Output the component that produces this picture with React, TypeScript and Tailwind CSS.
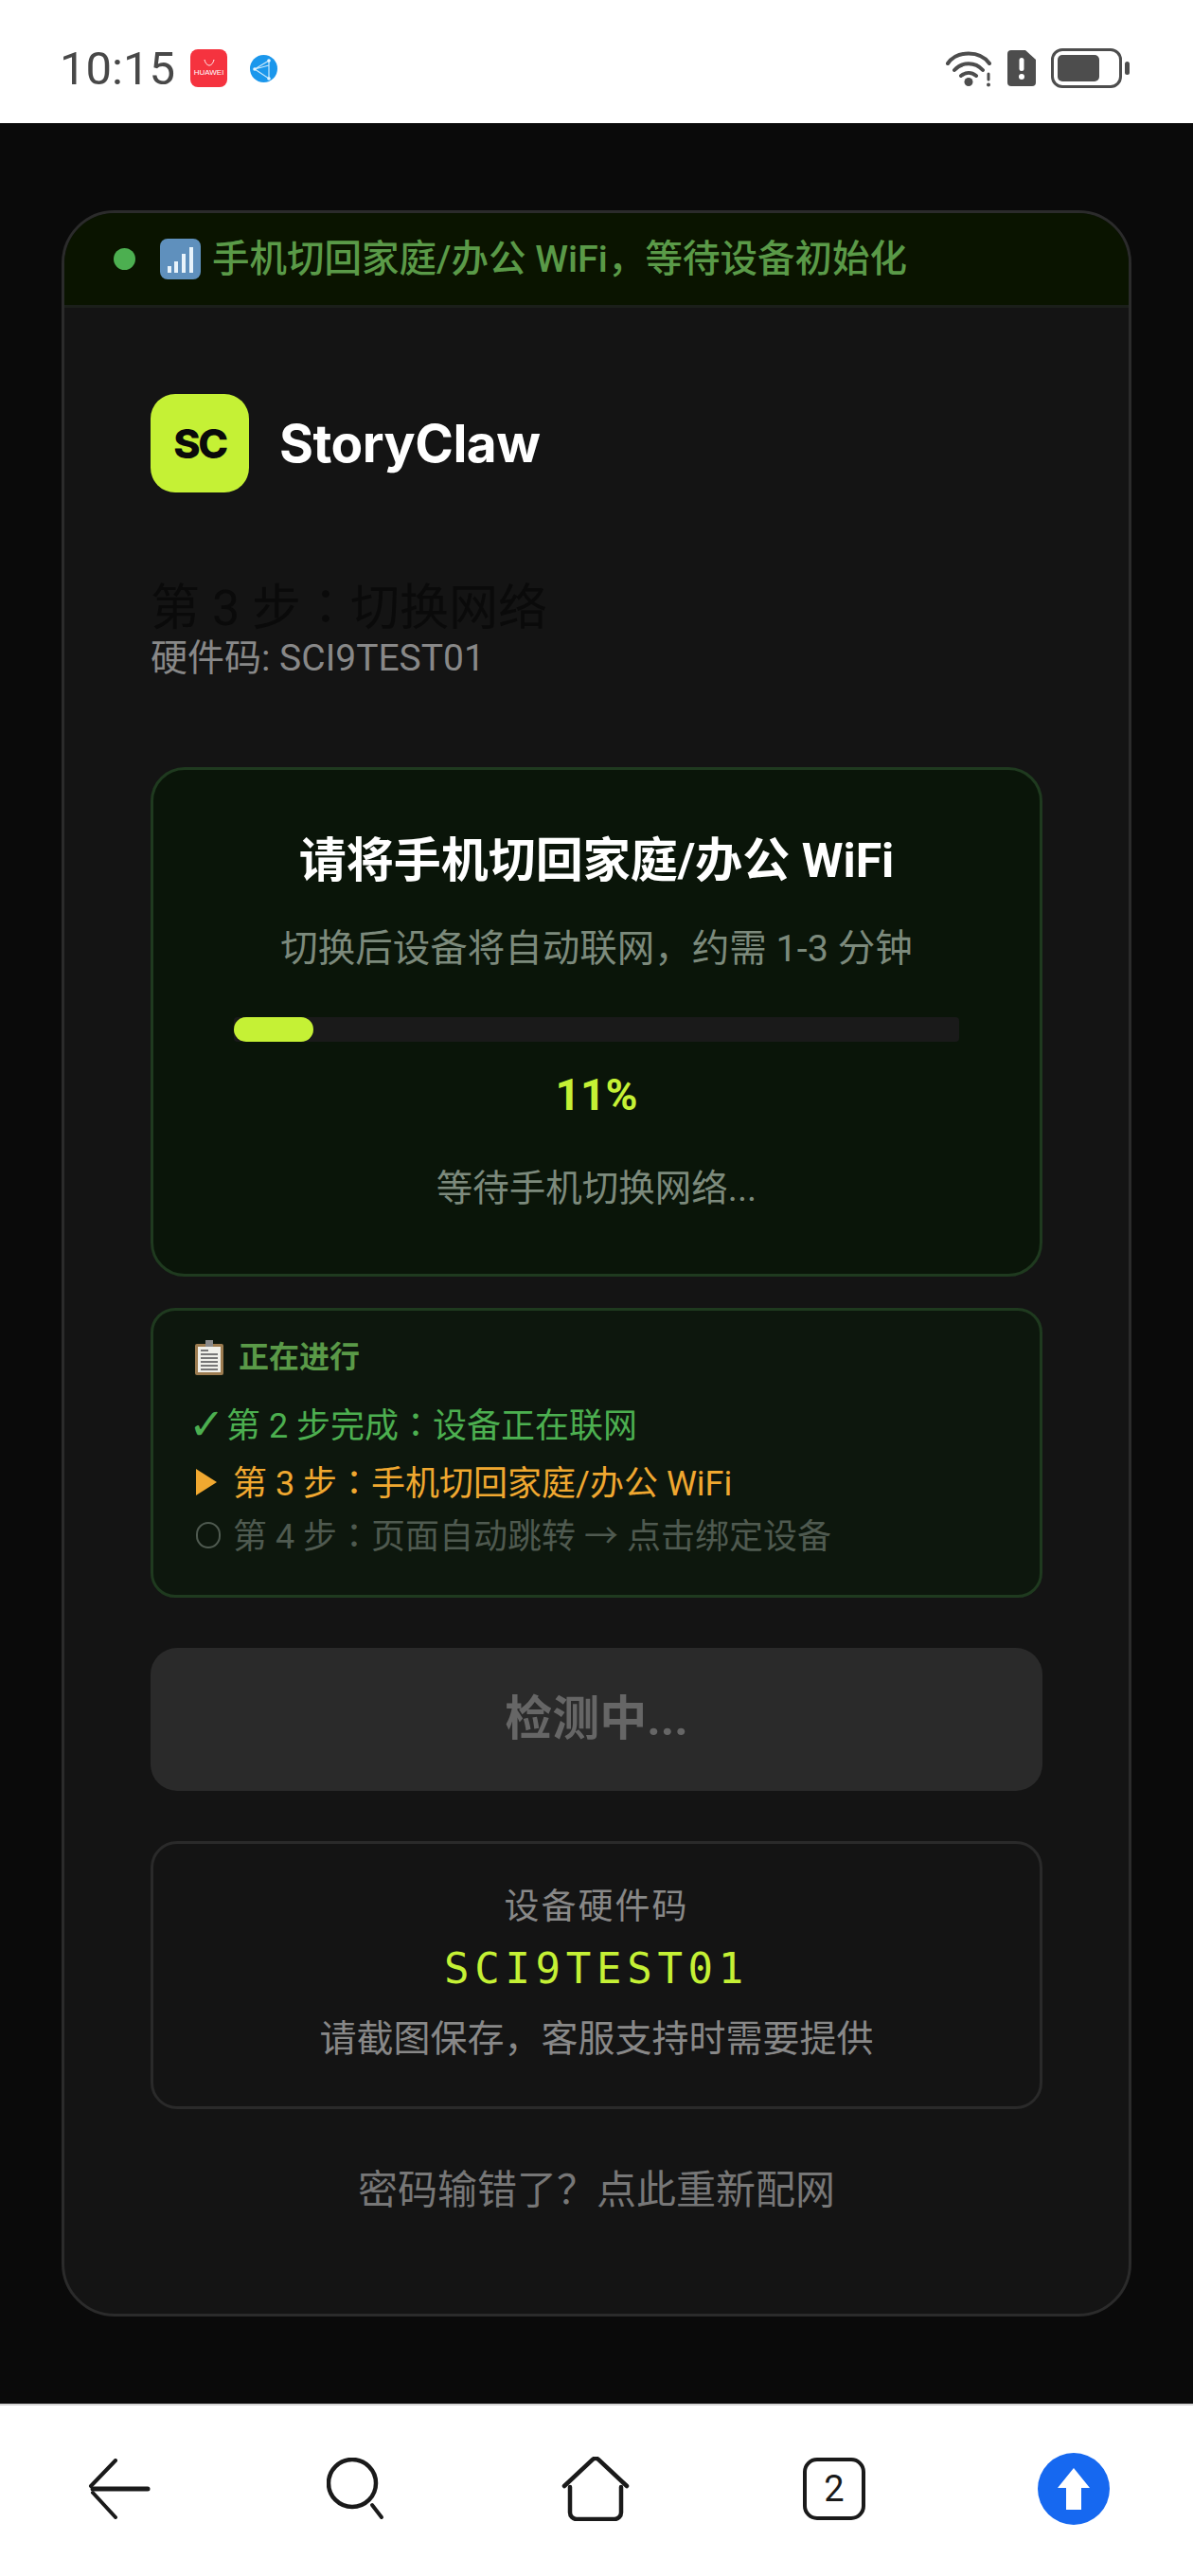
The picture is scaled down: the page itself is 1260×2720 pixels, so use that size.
const sans = "font-['Roboto','Noto_Sans_CJK_SC',sans-serif]";

// colon sits in the middle of its box in the reference, TC font does that
function Colon() {
  return <span className="font-['Noto_Sans_CJK_TC',sans-serif]">：</span>;
}

function StatusBar() {
  return (
    <div className="flex h-[130px] shrink-0 items-center justify-between bg-white pl-[63px] pr-[67px] pt-[14px]">
      <div className="flex items-center">
        <span className="font-['Roboto',sans-serif] text-[49px] leading-none text-[#484848]">10:15</span>
        <div className="ml-[16px] flex h-[40px] w-[39px] flex-col items-center justify-center rounded-[8px] bg-[#f5333f]">
          <svg width="14" height="7" viewBox="0 0 14 7" fill="none">
            <path d="M2 0c1 4 3 6 5 6s4-2 5-6" stroke="#fff" strokeWidth="1" />
          </svg>
          <span className="mt-[2px] font-['Liberation_Sans',sans-serif] text-[8px] leading-[10px] text-white">HUAWEI</span>
        </div>
        <svg className="ml-[24px]" width="29" height="29" viewBox="0 0 29 29">
          <circle cx="14.5" cy="14.5" r="14.5" fill="#1b97ec" />
          <path d="M20 6 5 15l15 10L20 6ZM5 15l15-4" stroke="#cdeafc" strokeWidth="1.2" fill="none" />
          <circle cx="20" cy="6" r="1.8" fill="#e6f5ff" />
          <circle cx="5" cy="15" r="1.8" fill="#e6f5ff" />
          <circle cx="20" cy="25" r="1.8" fill="#e6f5ff" />
        </svg>
      </div>
      <div className="flex items-center">
        <svg width="50" height="39" viewBox="0 0 50 39" fill="none" stroke="#4d4d4d" strokeWidth="4" strokeLinecap="round">
          <path d="M2 14C12 0 36 0 46 14" />
          <path d="M9 21c8-9 22-9 30 0" />
          <path d="M16 27c5-4 11-4 16 0" />
          <circle cx="24" cy="33.5" r="4.5" fill="#4d4d4d" stroke="none" />
          <path d="M45 25v6" strokeWidth="3" />
          <circle cx="45" cy="36.5" r="2" fill="#4d4d4d" stroke="none" />
        </svg>
        <svg className="ml-[15px]" width="30" height="38" viewBox="0 0 30 38">
          <path d="M4 0h15l11 10v24a4 4 0 0 1-4 4H4a4 4 0 0 1-4-4V4a4 4 0 0 1 4-4Z" fill="#4d4d4d" />
          <rect x="12.5" y="8" width="5" height="14" rx="2.5" fill="#fff" />
          <circle cx="15" cy="28" r="3" fill="#fff" />
        </svg>
        <div className="ml-[16px] h-[42px] w-[75px] rounded-[12px] border-[3px] border-[#4d4d4d] p-[4px]">
          <div className="h-full w-[44px] rounded-[5px] bg-[#4d4d4d]" />
        </div>
        <div className="ml-[3px] h-[14px] w-[5px] rounded-[3px] bg-[#4d4d4d]" />
      </div>
    </div>
  );
}

function Banner() {
  return (
    <div className="flex h-[100px] items-center border-b-[3px] border-[#1b1f1a] bg-[#0a1400] pl-[52px]">
      <div className="h-[23px] w-[23px] rounded-full bg-[#4caf50]" />
      <svg className="ml-[26px]" width="43" height="43" viewBox="0 0 43 43">
        <rect width="43" height="43" rx="8" fill="#5f90bd" />
        <g fill="#e8f3fb">
          <rect x="8" y="29" width="4" height="7" />
          <rect x="15" y="24" width="4" height="12" />
          <rect x="23" y="16" width="4" height="20" />
          <rect x="31" y="9" width="4" height="27" />
        </g>
      </svg>
      <span className={`${sans} ml-[12px] text-[39.5px] font-medium leading-none text-[#5a9a48]`}>
        手机切回家庭/办公 WiFi，等待设备初始化
      </span>
    </div>
  );
}

function Steps() {
  return (
    <div className="mt-[33px] h-[306px] rounded-[26px] border-[3px] border-[#1f3a1f] bg-[#0d170d] pl-[42px] pt-[27px]">
      <div className="flex h-[44px] items-center">
        <svg width="30" height="38" viewBox="0 0 30 38" className="ml-[2px]">
          <rect x="0" y="5" width="30" height="33" rx="2" fill="#9c7c50" />
          <rect x="3" y="8" width="24" height="27" fill="#f0f0ea" />
          <rect x="11" y="1" width="8" height="7" fill="#8a8a8a" />
          <g fill="#777">
            <rect x="6" y="11" width="8" height="2" />
            <rect x="6" y="15" width="18" height="2" />
            <rect x="6" y="19" width="18" height="2" />
            <rect x="6" y="23" width="18" height="2" />
            <rect x="6" y="27" width="18" height="2" />
            <rect x="6" y="31" width="18" height="2" />
          </g>
        </svg>
        <span className={`${sans} ml-[16px] text-[32px] font-bold leading-none text-[#5a9a48]`}>正在进行</span>
      </div>
      <div className="mt-[20px] flex h-[58px] items-center">
        <span className="ml-[-5px] w-[40px] font-['DejaVu_Sans',sans-serif] text-[46px] font-bold leading-none text-[#4caf50]">✓</span>
        <span className={`${sans} text-[36px] leading-none text-[#4caf50]`}>第 2 步完成<Colon />设备正在联网</span>
      </div>
      <div className="mt-[2px] flex h-[60px] items-center">
        <svg width="22" height="28" viewBox="0 0 22 28" className="ml-[3px] mr-[17px]">
          <path d="M0 0 22 14 0 28Z" fill="#f0a830" />
        </svg>
        <span className={`${sans} text-[36px] leading-none text-[#f0a830]`}>第 3 步<Colon />手机切回家庭/办公 WiFi</span>
      </div>
      <div className="mt-[-2px] flex h-[56px] items-center">
        <div className="ml-[3px] mr-[13px] h-[28px] w-[26px] rounded-full border-2 border-[#4f5a50]" />
        <span className={`${sans} text-[36px] leading-none text-[#4f5a50]`}>第 4 步<Colon />页面自动跳转 → 点击绑定设备</span>
      </div>
    </div>
  );
}

function NavBar() {
  return (
    <div className="flex h-[182px] shrink-0 items-center border-t-2 border-[#d4d4d4] bg-white pb-[4px] pl-[92px] text-[#1a1a1a]">
      <svg width="68" height="64" viewBox="0 0 68 64" fill="none" stroke="#1a1a1a" strokeLinecap="round">
        <path d="M30 2 4 29" strokeWidth="4" />
        <path d="M6 32h58" strokeWidth="5" />
        <path d="M6 36 30 62" strokeWidth="4" />
      </svg>
      <svg className="ml-[185px]" width="62" height="66" viewBox="0 0 62 66" fill="none" stroke="#1a1a1a" strokeLinecap="round" strokeWidth="4.5">
        <circle cx="27" cy="27" r="25" />
        <path d="M48 50 58 63" strokeWidth="4" />
      </svg>
      <svg className="ml-[186px]" width="72" height="68" viewBox="0 0 72 68" fill="none" stroke="#1a1a1a" strokeLinecap="round" strokeWidth="4.5">
        <path d="M3 31 33 3a4 4 0 0 1 6 0l30 28" />
        <path d="M9 32v27a7 7 0 0 0 7 7h40a7 7 0 0 0 7-7V32" />
      </svg>
      <div className="ml-[183px] flex h-[66px] w-[66px] items-center justify-center rounded-[15px] border-[4px] border-[#1a1a1a]">
        <span className="font-['Roboto',sans-serif] text-[38px] leading-none">2</span>
      </div>
      <svg className="ml-[182px]" width="76" height="76" viewBox="0 0 76 76">
        <circle cx="38" cy="38" r="38" fill="#1668f0" />
        <path d="M38 16 55 37H46V60H30V37H21Z" fill="#fff" />
      </svg>
    </div>
  );
}

export default function App() {
  return (
    <div className="flex h-[2720px] w-[1260px] flex-col overflow-hidden bg-[#0a0a0a]">
      <StatusBar />
      <main className="flex-1 px-[65px] pt-[92px]">
        <div className="h-[2224px] overflow-hidden rounded-[56px] border-[3px] border-[#2b2b2b] bg-[#141414]">
          <Banner />
          <div className="px-[91px] pt-[91px]">
            <div className="flex items-center">
              <div className="flex h-[104px] w-[104px] items-center justify-center rounded-[26px] bg-[#c5f135]">
                <span className="font-['Inter',sans-serif] text-[43px] font-extrabold leading-none tracking-[-2.5px] text-[#0a0a0a]">SC</span>
              </div>
              <span className="ml-[32px] font-['Inter',sans-serif] text-[55px] font-bold leading-none tracking-[-0.5px] text-white">StoryClaw</span>
            </div>

            <h1 className={`${sans} mt-[88px] h-[60px] text-[52px] font-normal leading-[60px] text-[#0a0a0a]`}>第 3 步<Colon />切换网络</h1>
            <p className={`${sans} mt-[5px] h-[44px] text-[39px] leading-[44px] text-[#888888]`}>硬件码: SCI9TEST01</p>

            <section className="mt-[93px] flex h-[538px] flex-col items-center rounded-[36px] border-[3px] border-[#1f3a1f] bg-[#0a1509] px-[85px] pt-[66px]">
              <h2 className={`${sans} text-[50px] font-bold leading-[60px] text-white`}>请将手机切回家庭/办公 WiFi</h2>
              <p className={`${sans} mt-[38px] text-[39.5px] leading-[50px] text-[#7c8a7c]`}>切换后设备将自动联网，约需 1-3 分钟</p>
              <div className="mt-[47px] h-[26px] w-full overflow-hidden rounded-[4px] bg-[#1a1a1a]">
                <div className="h-full w-[11%] rounded-[13px] bg-[#c5f135]" />
              </div>
              <div className="mt-[28px] font-['Roboto',sans-serif] text-[46px] font-bold leading-[56px] text-[#c5f135]">11%</div>
              <p className={`${sans} mt-[46px] text-[38.5px] leading-[50px] text-[#7c8a7c]`}>等待手机切换网络...</p>
            </section>

            <Steps />

            <button className={`${sans} mt-[53px] h-[151px] w-full rounded-[28px] bg-[#2a2a2a] text-[50px] font-bold text-[#666666]`}>检测中...</button>

            <section className="mt-[53px] flex h-[283px] flex-col items-center rounded-[28px] border-[3px] border-[#2a2a2a] bg-[#141414] pt-[42px]">
              <p className={`${sans} text-[37px] leading-[50px] tracking-[2px] text-[#888888]`}>设备硬件码</p>
              <p className="mt-[12px] font-['DejaVu_Sans_Mono',monospace] text-[44px] leading-[56px] tracking-[5.7px] text-[#c5f135]">SCI9TEST01</p>
              <p className={`${sans} mt-[21px] text-[39px] leading-[50px] text-[#888888]`}>请截图保存，客服支持时需要提供</p>
            </section>

            <p className={`${sans} mt-[60px] text-center text-[42px] leading-[52px] text-[#777777]`}>密码输错了？点此重新配网</p>
          </div>
        </div>
      </main>
      <NavBar />
    </div>
  );
}
